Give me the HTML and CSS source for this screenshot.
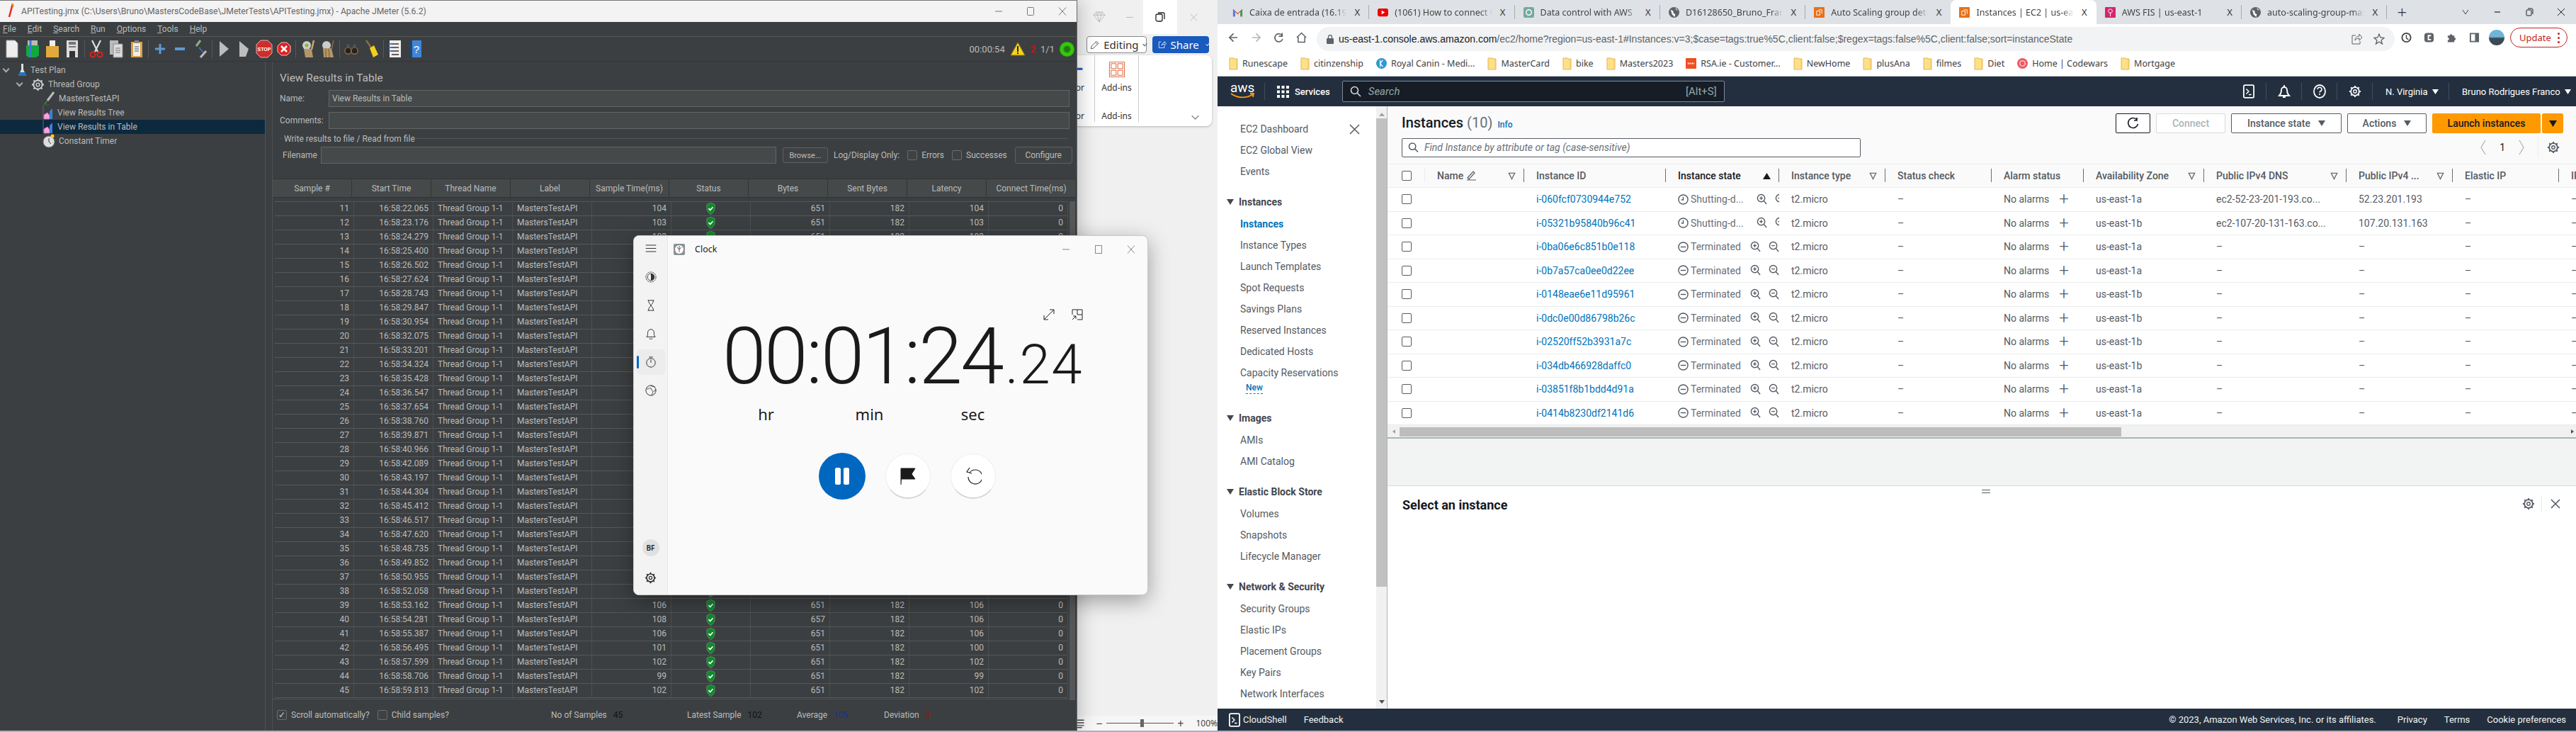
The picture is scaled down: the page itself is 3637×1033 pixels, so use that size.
FILE: index.html
```html
<!DOCTYPE html>
<html lang="en">
<head>
    <meta charset="UTF-8">
    <meta name="viewport" content="width=device-width, initial-scale=1.0">
    <title>Desktop</title>
    <link rel="stylesheet" href="styles.css">
</head>
<body>
    <svg class="defs" width="0" height="0">
        <symbol id="folder" viewBox="0 0 13 18"><path d="M1 1h6l1 1h4v15H1z" fill="#ffdf8a" stroke="#e2b84f"/><path d="M11 3v14" stroke="#f2c660"/></symbol>
        <symbol id="shield" viewBox="0 0 14 18"><path d="M7 0l6 2.500v6c0 4-3 7.500-6 9.500-3-2-6-5.500-6-9.500v-6z" fill="#0d8a2a" stroke="#7fae86" stroke-width=".6"/><path d="M3.800 8.600l2.400 2.600 4-4.600" fill="none" stroke="#fff" stroke-width="1.700"/></symbol>
        <symbol id="chart" viewBox="0 0 16 22"><path d="M1 20V1" stroke="#666" fill="none"/><path d="M2 20v-6l5-3 3 4v5z" fill="#f4a6e0" stroke="#d36ab8"/><path d="M10 20V9l4-4v15z" fill="#3e80d8"/></symbol>
        <symbol id="zoomin" viewBox="0 0 16 18"><circle cx="7" cy="7" r="5.500" fill="none" stroke="#545b64" stroke-width="1.500"/><path d="M11 11l4 5M4.500 7h5M7 4.500v5" fill="none" stroke="#545b64" stroke-width="1.500"/></symbol>
        <symbol id="zoomout" viewBox="0 0 16 18"><circle cx="7" cy="7" r="5.500" fill="none" stroke="#545b64" stroke-width="1.500"/><path d="M11 11l4 5M4.500 7h5" fill="none" stroke="#545b64" stroke-width="1.500"/></symbol>
        <symbol id="stop-state" viewBox="0 0 16 16"><circle cx="8" cy="8" r="7" fill="none" stroke="#545b64" stroke-width="1.500"/><path d="M4 8h8" stroke="#545b64" stroke-width="1.500"/></symbol>
        <symbol id="wait-state" viewBox="0 0 16 16"><circle cx="8" cy="8" r="7" fill="none" stroke="#545b64" stroke-width="1.500"/><path d="M8 4v4.500H5" fill="none" stroke="#545b64" stroke-width="1.500"/></symbol>
        <symbol id="gear" viewBox="0 0 20 20"><circle cx="10" cy="10" r="6.500" fill="none" stroke="currentColor" stroke-width="2"/><circle cx="10" cy="10" r="2.500" fill="none" stroke="currentColor" stroke-width="1.500"/><path d="M10 1v3M10 16v3M1 10h3M16 10h3M3.600 3.600l2 2M14.400 14.400l2 2M3.600 16.400l2-2M14.400 5.600l2-2" stroke="currentColor" stroke-width="2"/></symbol>
        <symbol id="caret" viewBox="0 0 10 10"><path d="M0 1h10L5 9z" fill="currentColor"/></symbol>
        <symbol id="caret-o" viewBox="0 0 12 12"><path d="M1.500 1.500h9L6 10.500z" fill="none" stroke="currentColor" stroke-width="1.500"/></symbol>
        <symbol id="term" viewBox="0 0 18 22"><rect x="1" y="1" width="16" height="20" rx="2" fill="none" stroke="currentColor" stroke-width="2"/><path d="M5 7l4 4-4 4M9 16h4" fill="none" stroke="currentColor" stroke-width="1.600"/></symbol>
    </svg>

    <!-- word, mostly behind the other windows -->
    <section class="word">
        <div class="word-caption">
            <svg class="w-ic" viewBox="0 0 20 18"><path d="M5 1h10l4 5-9 11L1 6zM1 6h18M7 6l3 11 3-11M5 1l2 5 3-5 3 5 2-5" fill="none" stroke="#bbb" stroke-width="1.100"/></svg>
            <span class="w-min"></span>
            <span class="w-active"><svg width="14" height="14" viewBox="0 0 14 14"><rect x="1" y="3" width="9" height="10" rx="2" fill="none" stroke="#222" stroke-width="1.300"/><path d="M4 1h7a2 2 0 012 2v7" fill="none" stroke="#222" stroke-width="1.300"/></svg></span>
            <svg class="w-close" viewBox="0 0 14 14"><path d="M1 1l12 12M13 1L1 13" stroke="#bbb" stroke-width="1.200"/></svg>
        </div>
        <div class="word-actions">
            <span class="editing">
                <svg width="19" height="19" viewBox="0 0 19 19"><path d="M2 17l1-5L13 2l4 4L7 16zM11 4l4 4" fill="none" stroke="#333" stroke-width="1.100"/></svg>
                Editing <i class="chev"></i>
            </span>
            <span class="share">
                <svg width="18" height="18" viewBox="0 0 18 18"><path d="M7 3H2v13h12v-4M8 11c0-4 3-6 6-6V2l4 5-4 4V8c-3 0-5 1-6 3z" fill="none" stroke="#fff" stroke-width="1.200"/></svg>
                Share <i class="chev chev-w"></i>
            </span>
        </div>
        <div class="ribbon">
            <div class="rb-group rb-editor">
                <svg width="24" height="28" viewBox="0 0 24 28"><path d="M0 4h10M0 13h24M0 22h10" stroke="#185abd" stroke-width="4"/><circle cx="11" cy="3" r="3" fill="#185abd"/></svg>
                <span class="rb-text">Editor</span>
                <span class="rb-label">Editor</span>
            </div>
            <div class="rb-group rb-addins">
                <svg width="28" height="28" viewBox="0 0 28 28"><path d="M.5.500h27v27H.5z" fill="none" stroke="#d83b01"/><path d="M3.500 3.500h9v9h-9zM15.500 3.500h9v9h-9zM3.500 15.500h9v9h-9zM15.500 15.500h9v9h-9z" fill="none" stroke="#d83b01"/></svg>
                <span class="rb-text">Add-ins</span>
                <span class="rb-label">Add-ins</span>
            </div>
            <i class="chev chev-lg"></i>
        </div>
        <div class="word-status">
            <svg class="ws-print" viewBox="0 0 10 14"><path d="M0 2h10M0 6h10M0 10h10M0 13h7" stroke="#444" stroke-width="1.500"/></svg>
            <span class="ws-sign">−</span>
            <span class="slider"><i class="thumb"></i></span>
            <span class="ws-sign">+</span>
            <span class="ws-pct">100%</span>
        </div>
    </section>

    <!-- jmeter -->
    <section class="jmeter">
        <div class="jm-title">
            <svg width="10" height="24" viewBox="0 0 10 24"><path d="M7 1L2 20" stroke="#e0302a" stroke-width="2.600"/><path d="M7 1l1 5" stroke="#f5a623" stroke-width="2"/></svg>
            <span class="jm-title-text">APITesting.jmx (C:\Users\Bruno\MastersCodeBase\JMeterTests\APITesting.jmx) - Apache JMeter (5.6.2)</span>
            <span class="win-btns">
                <svg viewBox="0 0 12 12"><path d="M1 6h10" stroke="#777"/></svg>
                <svg viewBox="0 0 12 12"><rect x="1.500" y=".5" width="9" height="11" rx="1" fill="none" stroke="#777"/></svg>
                <svg viewBox="0 0 12 12"><path d="M1 .5l10 11M11 .5L1 11.500" stroke="#777"/></svg>
            </span>
        </div>
        <nav class="jm-menu">
            <a><u>F</u>ile</a><a><u>E</u>dit</a><a><u>S</u>earch</a><a><u>R</u>un</a><a><u>O</u>ptions</a><a><u>T</u>ools</a><a><u>H</u>elp</a>
        </nav>
        <div class="jm-toolbar">
            <span class="tb"><svg viewBox="0 0 20 26"><path d="M2 1h12l4 4v20H2z" fill="#eee" stroke="#aaa"/></svg></span>
            <span class="tb"><svg viewBox="0 0 20 26"><path d="M3 1h14v8H3z" fill="#bbb"/><path d="M1 8h18v14l-4 3H4l-3-3z" fill="#13a83e"/><path d="M7 1v24" stroke="#3a7bd5" stroke-width="3"/></svg></span>
            <span class="tb"><svg viewBox="0 0 20 26"><path d="M6 1h8v8H6z" fill="#eee"/><path d="M1 9h18v16H1z" fill="#e3a93b"/></svg></span>
            <span class="tb"><svg viewBox="0 0 20 26"><path d="M2 1h16v24H2z" fill="#ddd"/><path d="M5 3h10v4H5zM5 9h10v2H5z" fill="#777"/><path d="M6 16h8v9H6z" fill="#333"/></svg></span>
            <i class="tb-sep"></i>
            <span class="tb"><svg viewBox="0 0 20 26"><path d="M4 1l8 16M16 1L8 17" stroke="#ddd" stroke-width="2.200"/><circle cx="5" cy="21" r="3.500" fill="none" stroke="#e02020" stroke-width="2"/><circle cx="15" cy="21" r="3.500" fill="none" stroke="#e02020" stroke-width="2"/></svg></span>
            <span class="tb"><svg viewBox="0 0 20 26"><path d="M1 1h12v20H1z" fill="#bbb"/><path d="M6 6h13v19H6z" fill="#ddd" stroke="#888"/><path d="M9 12h7M9 15h7M9 18h7" stroke="#777"/></svg></span>
            <span class="tb"><svg viewBox="0 0 20 26"><path d="M2 3h16v22H2z" fill="#d8a24a"/><path d="M5 5h10v18H5z" fill="#eee"/><path d="M7 1h6v4H7z" fill="#888"/><path d="M7 10h6M7 13h6M7 16h6" stroke="#555"/></svg></span>
            <i class="tb-sep"></i>
            <span class="tb"><svg viewBox="0 0 20 20"><path d="M10 3v14M3 10h14" stroke="#5b9bd5" stroke-width="3"/></svg></span>
            <span class="tb"><svg viewBox="0 0 20 20"><path d="M3 10h14" stroke="#5b9bd5" stroke-width="4"/></svg></span>
            <span class="tb"><svg viewBox="0 0 20 26"><path d="M10 1L4 9" stroke="#8fa98f" stroke-width="3"/><path d="M8 11l6 7" stroke="#3a7bd5" stroke-width="1.500"/><path d="M18 16l-8 9" stroke="#bbb" stroke-width="3"/></svg></span>
            <i class="tb-sep"></i>
            <span class="tb"><svg viewBox="0 0 20 26"><path d="M4 2l13 11L4 24z" fill="#bdbdbd"/></svg></span>
            <span class="tb"><svg viewBox="0 0 20 26"><path d="M4 2l13 11-4 11H4z" fill="#bdbdbd"/></svg></span>
            <span class="tb tb-wide"><svg viewBox="0 0 24 26"><path d="M7 1h10l6 6v12l-6 6H7l-6-6V7z" fill="#cf2d2d" stroke="#e8b0b0"/><text x="12" y="16" class="stop-t">STOP</text></svg></span>
            <span class="tb"><svg viewBox="0 0 20 26"><path d="M6 4h8l5 5v8l-5 5H6l-5-5V9z" fill="#e02020" stroke="#f2c0c0"/><path d="M6 9l8 8M14 9l-8 8" stroke="#fff" stroke-width="2.500"/></svg></span>
            <i class="tb-sep"></i>
            <span class="tb"><svg viewBox="0 0 20 26"><circle cx="8" cy="8" r="6" fill="#ccc"/><circle cx="8" cy="8" r="2.500" fill="#7dbb3c"/><path d="M4 13h11l2 12H6z" fill="#b5966a"/><path d="M15 14l3-13" stroke="#c8a86d" stroke-width="2.500"/></svg></span>
            <span class="tb"><svg viewBox="0 0 20 26"><circle cx="8" cy="8" r="6" fill="#ccc"/><path d="M3 12h12l3 13H4z" fill="#b5966a"/><path d="M7 13v12M11 13l1 12M15 14l3-13" stroke="#8a6d40" stroke-width="1.500"/></svg></span>
            <i class="tb-sep"></i>
            <span class="tb"><svg viewBox="0 0 22 20"><circle cx="6" cy="13" r="5" fill="#222" stroke="#a06b2c" stroke-width="1.500"/><circle cx="16" cy="13" r="5" fill="#222" stroke="#a06b2c" stroke-width="1.500"/><path d="M4 3h4v6H4zM14 3h4v6h-4zM9 8h4v3H9z" fill="#555"/></svg></span>
            <span class="tb"><svg viewBox="0 0 20 26"><path d="M2 1l9 13" stroke="#8a6d40" stroke-width="2.500"/><path d="M7 12l6-4 6 13-7 4z" fill="#f2d01e"/></svg></span>
            <i class="tb-sep"></i>
            <span class="tb"><svg viewBox="0 0 20 26"><path d="M2 1h16v24H2z" fill="#eee"/><path d="M5 6h10M5 11h10M5 16h10M5 21h10" stroke="#333" stroke-width="1.500"/><path d="M1 6h4M1 11h4M1 16h4" stroke="#3a7bd5" stroke-width="2"/></svg></span>
            <span class="tb"><svg viewBox="0 0 20 26"><path d="M2 1h16v24H2z" fill="#3f86d8"/><path d="M2 1h3v24H2z" fill="#22456f"/><text x="11" y="19" class="help-t">?</text></svg></span>
            <div class="jm-run">
                <span>00:00:54</span>
                <svg width="22" height="20" viewBox="0 0 22 20"><path d="M11 1l10 18H1z" fill="#f6d31e" stroke="#8c7a10"/><path d="M11 6v8M11 15v2" stroke="#222" stroke-width="2"/></svg>
                <span class="jm-err">2</span>
                <span>1/1</span>
                <i class="jm-led"></i>
            </div>
        </div>
        <div class="jm-body">
            <aside class="jm-tree">
                <div class="tree-row lv0"><i class="tw"></i><svg width="13" height="20" viewBox="0 0 13 20"><path d="M5 1h3v8l4 9H1l4-9z" fill="#ddd"/><path d="M3 13h7l2 5H1z" fill="#1e73c8"/></svg><span>Test Plan</span></div>
                <div class="tree-row lv1"><i class="tw"></i><svg class="c-gear" width="19" height="19"><use href="#gear"/></svg><span>Thread Group</span></div>
                <div class="tree-row lv2"><svg width="18" height="20" viewBox="0 0 18 20"><path d="M16 1L7 13" stroke="#bbb" stroke-width="3"/><path d="M7 13l-4 5" stroke="#2a8a3a" stroke-width="2"/><path d="M1 19h9" stroke="#555"/></svg><span>MastersTestAPI</span></div>
                <div class="tree-row lv2"><svg width="16" height="22"><use href="#chart"/></svg><span>View Results Tree</span></div>
                <div class="tree-row lv2 tree-sel"><svg width="16" height="22"><use href="#chart"/></svg><span>View Results in Table</span></div>
                <div class="tree-row lv2"><svg width="18" height="20" viewBox="0 0 18 20"><circle cx="9" cy="11" r="8" fill="#ddd" stroke="#777"/><path d="M9 6v5l3 3" stroke="#333" fill="none"/><circle cx="14" cy="3" r="2.500" fill="#f2d01e"/></svg><span>Constant Timer</span></div>
            </aside>
            <main class="jm-main">
                <h2 class="jm-heading">View Results in Table</h2>
                <div class="jm-field"><label class="lb-name">Name:</label><div class="jm-input">View Results in Table</div></div>
                <div class="jm-field"><label class="lb-name">Comments:</label><div class="jm-input"></div></div>
                <div class="jm-legend"><span>Write results to file / Read from file</span></div>
                <div class="jm-field jm-file">
                    <label class="lb-file">Filename</label>
                    <div class="jm-input"></div>
                    <span class="jm-btn jm-browse">Browse...</span>
                    <span class="lg-label">Log/Display Only:</span>
                    <i class="jm-check"></i><span>Errors</span>
                    <i class="jm-check"></i><span>Successes</span>
                    <span class="jm-btn jm-config">Configure</span>
                </div>
                <div class="res-head">
                    <span>Sample #</span><span>Start Time</span><span>Thread Name</span><span>Label</span><span>Sample Time(ms)</span><span>Status</span><span>Bytes</span><span>Sent Bytes</span><span>Latency</span><span>Connect Time(ms)</span>
                </div>
                <div class="res-wrap">
                    <div id="resRows" class="res-rows"></div>
                    <i class="res-scroll"></i>
                </div>
                <div class="jm-foot">
                    <i class="jm-check jm-checked">✓</i><span>Scroll automatically?</span>
                    <i class="jm-check"></i><span>Child samples?</span>
                    <span class="st st-1">No of Samples <b>45</b></span>
                    <span class="st st-2">Latest Sample <b>102</b></span>
                    <span class="st st-3">Average <b class="st-blue">105</b></span>
                    <span class="st st-4">Deviation <b class="st-red">3</b></span>
                </div>
            </main>
        </div>
    </section>

    <!-- clock app -->
    <section class="clock">
        <aside class="cl-side">
            <svg class="cl-ic cl-burger" viewBox="0 0 16 12"><path d="M0 1h16M0 6h16M0 11h16" stroke="#333" stroke-width="1.100"/></svg>
            <svg class="cl-ic" viewBox="0 0 18 18"><circle cx="9" cy="9" r="8" fill="none" stroke="#333" stroke-dasharray="3 1"/><circle cx="9" cy="9" r="5.500" fill="none" stroke="#333"/><path d="M9 3.500a5.500 5.500 0 010 11z" fill="#333"/></svg>
            <svg class="cl-ic" viewBox="0 0 18 18"><path d="M4 1h10M4 17h10M5 1c0 4 3 6 4 8 1-2 4-4 4-8M5 17c0-4 3-6 4-8 1 2 4 4 4 8" fill="none" stroke="#333" stroke-width="1.100"/></svg>
            <svg class="cl-ic" viewBox="0 0 18 18"><path d="M2 14c2-2 2-3 2-7a5 5 0 0110 0c0 4 0 5 2 7zM7 16a2 2 0 004 0" fill="none" stroke="#333" stroke-width="1.100"/></svg>
            <span class="cl-sel"><i class="cl-bar"></i><svg class="cl-ic" viewBox="0 0 18 18"><circle cx="9" cy="10" r="7" fill="none" stroke="#333" stroke-width="1.100"/><path d="M6 1h6M9 5v5" stroke="#333" stroke-width="1.100"/></svg></span>
            <svg class="cl-ic" viewBox="0 0 18 18"><circle cx="9" cy="9" r="8" fill="none" stroke="#333" stroke-width="1.100"/><path d="M2 6c3 2 4-1 6-1s1 3 3 4 1 4-1 8M9 1c2 2 3 2 6 2M17 9c-2-1-3 0-3 2" fill="none" stroke="#333"/></svg>
            <span class="cl-grow"></span>
            <span class="cl-avatar">BF</span>
            <svg class="cl-ic cl-gear" width="18" height="18"><use href="#gear"/></svg>
        </aside>
        <div class="cl-main">
            <div class="cl-title">
                <svg width="16" height="16" viewBox="0 0 16 16"><rect width="16" height="16" rx="2" fill="#8a9296"/><circle cx="8" cy="8" r="6" fill="#fff"/><path d="M8 8V3M8 8l-3-3M8 8l3-3" stroke="#555"/><path d="M8 8v4" stroke="#d83b01"/></svg>
                <span class="cl-name">Clock</span>
                <span class="win-btns cl-btns">
                    <svg viewBox="0 0 12 12"><path d="M1 6h10" stroke="#888"/></svg>
                    <svg viewBox="0 0 12 12"><rect x="1.500" y=".5" width="9" height="11" fill="none" stroke="#888"/></svg>
                    <svg viewBox="0 0 12 12"><path d="M1 .5l10 11M11 .5L1 11.500" stroke="#888"/></svg>
                </span>
            </div>
            <div class="cl-tools">
                <svg width="16" height="16" viewBox="0 0 16 16"><path d="M1 15L15 1M9 1h6v6M1 9v6h6" fill="none" stroke="#222"/></svg>
                <svg width="16" height="16" viewBox="0 0 16 16"><path d="M1 8V1h14v14H8M8 1v7h7M1 15l5-5M2 10h4v4" fill="none" stroke="#222"/></svg>
            </div>
            <div class="cl-digits"><span>00:01:24</span><span class="cl-frac">.24</span></div>
            <div class="cl-units"><span>hr</span><span>min</span><span>sec</span></div>
            <div class="cl-actions">
                <span class="cl-pause"><svg width="24" height="24" viewBox="0 0 24 24"><rect x="2" y="0" width="8" height="24" rx="2.500" fill="#fff"/><rect x="14" y="0" width="8" height="24" rx="2.500" fill="#fff"/></svg></span>
                <span class="cl-round"><svg width="22" height="24" viewBox="0 0 22 24"><path d="M1 24V1h20l-5 8 5 7H2" fill="#1a1a1a" stroke="#1a1a1a"/></svg></span>
                <span class="cl-round"><svg width="24" height="26" viewBox="0 0 24 26"><path d="M7 8a10 10 0 11-2 6M7 1L3 7l7 2" fill="none" stroke="#222" stroke-width="1.200"/></svg></span>
            </div>
        </div>
    </section>

    <!-- chrome + aws console -->
    <section class="chrome">
        <div class="tabs">
            <div class="tab"><svg class="fav" viewBox="0 0 16 16"><path d="M1 14V3l7 6 7-6v11h-3V7L8 11 4 7v7z" fill="#ea4335"/><path d="M1 14V3l3 3v8z" fill="#4285f4"/><path d="M15 14V3l-3 3v8z" fill="#34a853"/></svg><span class="tab-t">Caixa de entrada (16.194)</span><span class="tab-x">X</span></div>
            <div class="tab"><svg class="fav" viewBox="0 0 16 16"><rect y="2" width="16" height="12" rx="3" fill="#e00"/><path d="M6 5l5 3-5 3z" fill="#fff"/></svg><span class="tab-t">(1061) How to connect to an AWS</span><span class="tab-x">X</span></div>
            <div class="tab"><svg class="fav" viewBox="0 0 16 16"><rect width="16" height="16" rx="3" fill="#74aa9c"/><circle cx="8" cy="8" r="4" fill="none" stroke="#fff" stroke-width="1.500"/></svg><span class="tab-t">Data control with AWS</span><span class="tab-x">X</span></div>
            <div class="tab"><svg class="fav" viewBox="0 0 16 16"><circle cx="8" cy="8" r="8" fill="#5f6368"/><path d="M3 4l4 2v3l3 2-1 4-4-4zM10 1l1 3 3 1" fill="#fff"/></svg><span class="tab-t">D16128650_Bruno_Franco_Masters</span><span class="tab-x">X</span></div>
            <div class="tab"><svg class="fav" viewBox="0 0 16 16"><rect width="16" height="16" rx="1" fill="#e8711a"/><path d="M4 6h5v6H4zM7 4h5v6" fill="none" stroke="#fff"/></svg><span class="tab-t">Auto Scaling group details</span><span class="tab-x">X</span></div>
            <div class="tab tab-on"><svg class="fav" viewBox="0 0 16 16"><rect width="16" height="16" rx="1" fill="#e8711a"/><path d="M4 6h5v6H4zM7 4h5v6" fill="none" stroke="#fff"/></svg><span class="tab-t">Instances | EC2 | us-east-1</span><span class="tab-x">X</span></div>
            <div class="tab"><svg class="fav" viewBox="0 0 16 16"><rect width="16" height="16" rx="1" fill="#d6246e"/><path d="M8 14V8M5 6a3 3 0 016 0c0 3-3 3-3 3S5 9 5 6z" fill="none" stroke="#fff"/></svg><span class="tab-t">AWS FIS | us-east-1</span><span class="tab-x">X</span></div>
            <div class="tab"><svg class="fav" viewBox="0 0 16 16"><circle cx="8" cy="8" r="8" fill="#5f6368"/><path d="M3 4l4 2v3l3 2-1 4-4-4zM10 1l1 3 3 1" fill="#fff"/></svg><span class="tab-t">auto-scaling-group-master</span><span class="tab-x">X</span></div>
            <span class="tab-plus">+</span>
            <span class="chr-btns">
                <svg viewBox="0 0 12 12"><path d="M2 3l4 6 4-6" fill="none" stroke="#444"/></svg>
                <svg viewBox="0 0 12 12"><path d="M2 6h8" stroke="#222" stroke-width="1.200"/></svg>
                <svg viewBox="0 0 12 12"><rect x="2" y="3" width="7" height="8" rx="1" fill="none" stroke="#222"/><path d="M4 1h5a2 2 0 012 2v6" fill="none" stroke="#222"/></svg>
                <svg viewBox="0 0 12 12"><path d="M1 1l10 10M11 1L1 11" stroke="#222"/></svg>
            </span>
        </div>
        <div class="address">
            <span class="nav-b"><svg viewBox="0 0 16 16"><path d="M14 8H2M8 2L2 8l6 6" fill="none" stroke="#5f6368" stroke-width="1.800"/></svg></span>
            <span class="nav-b"><svg viewBox="0 0 16 16"><path d="M2 8h12M8 2l6 6-6 6" fill="none" stroke="#b4b6b9" stroke-width="1.800"/></svg></span>
            <span class="nav-b"><svg viewBox="0 0 16 16"><path d="M13 5a6 6 0 10.800 5M13 1v5H8" fill="none" stroke="#5f6368" stroke-width="1.800"/></svg></span>
            <span class="nav-b"><svg viewBox="0 0 16 16"><path d="M1 8l7-7 7 7M3 7v8h10V7" fill="none" stroke="#5f6368" stroke-width="1.600"/></svg></span>
            <div class="omni">
                <svg width="10" height="13" viewBox="0 0 10 13"><rect y="5" width="10" height="8" rx="1" fill="#5f6368"/><path d="M2.500 5V3a2.500 2.500 0 015 0v2" fill="none" stroke="#5f6368" stroke-width="1.300"/></svg>
                <span class="url"><b>us-east-1.console.aws.amazon.com</b>/ec2/home?region=us-east-1#Instances:v=3;$case=tags:true%5C,client:false;$regex=tags:false%5C,client:false;sort=instanceState</span>
                <svg width="16" height="16" viewBox="0 0 16 16"><path d="M7 3H2v12h11v-4M6 10c0-4 3-6 6-6V1l4 5-4 4V7c-3 0-5 1-6 3z" fill="none" stroke="#5f6368"/></svg>
                <svg class="om-star" width="16" height="16" viewBox="0 0 16 16"><path d="M8 1l2 5 5 .5-4 3.500 1.500 5L8 12l-4.500 3L5 10 1 6.500 6 6z" fill="none" stroke="#5f6368" stroke-width="1.300"/></svg>
            </div>
            <span class="ext"><svg viewBox="0 0 16 16"><circle cx="8" cy="8" r="6.500" fill="none" stroke="#444" stroke-width="2"/><path d="M8 4v5l3 2" fill="none" stroke="#444" stroke-width="1.500"/></svg></span>
            <span class="ext"><svg viewBox="0 0 16 16"><rect x="1" y="1" width="14" height="14" rx="4" fill="#5f6368"/><path d="M11 5H7v6h4" fill="none" stroke="#fff" stroke-width="2"/></svg></span>
            <span class="ext"><svg viewBox="0 0 16 16"><path d="M2 5h3a2 2 0 014 0h3v3a2 2 0 010 4v3H2v-3a2 2 0 000-4z" fill="#5f6368"/></svg></span>
            <span class="ext"><svg viewBox="0 0 16 16"><path d="M2 2h12v12H2z" fill="none" stroke="#5f6368" stroke-width="2"/><path d="M9 2h5v12H9z" fill="#5f6368"/></svg></span>
            <span class="avatar"></span>
            <span class="update">Update <i class="dots"></i></span>
        </div>
        <div class="bookmarks">
            <a><svg class="bm"><use href="#folder"/></svg>Runescape</a>
            <a><svg class="bm"><use href="#folder"/></svg>citinzenship</a>
            <a><svg class="bm-i" viewBox="0 0 16 16"><circle cx="8" cy="8" r="8" fill="#2a9ad6"/><path d="M6 3v10M10 3L6 8l4 5" fill="none" stroke="#fff" stroke-width="1.400"/></svg>Royal Canin - Medi...</a>
            <a><svg class="bm"><use href="#folder"/></svg>MasterCard</a>
            <a><svg class="bm"><use href="#folder"/></svg>bike</a>
            <a><svg class="bm"><use href="#folder"/></svg>Masters2023</a>
            <a><svg class="bm-i" viewBox="0 0 16 16"><rect width="16" height="16" rx="1" fill="#ef4e23"/><path d="M3 8h10" stroke="#fff" stroke-width="2" stroke-dasharray="2 1"/></svg>RSA.ie - Customer...</a>
            <a><svg class="bm"><use href="#folder"/></svg>NewHome</a>
            <a><svg class="bm"><use href="#folder"/></svg>plusAna</a>
            <a><svg class="bm"><use href="#folder"/></svg>filmes</a>
            <a><svg class="bm"><use href="#folder"/></svg>Diet</a>
            <a><svg class="bm-i" viewBox="0 0 16 16"><circle cx="8" cy="8" r="8" fill="#ee5a62"/><circle cx="8" cy="8" r="4" fill="none" stroke="#fff" stroke-width="1.500" stroke-dasharray="2 1"/></svg>Home | Codewars</a>
            <a><svg class="bm"><use href="#folder"/></svg>Mortgage</a>
        </div>

        <header class="aws-bar">
            <span class="aws-logo">aws<svg width="34" height="9" viewBox="0 0 34 9"><path d="M1 1c9 7 22 7 31 1M28 1l5 0-1 5" fill="none" stroke="#f90" stroke-width="1.800"/></svg></span>
            <i class="aws-sep"></i>
            <svg class="aws-grid" width="17" height="17" viewBox="0 0 17 17"><path d="M0 0h4v4H0zM6.500 0h4v4h-4zM13 0h4v4h-4zM0 6.500h4v4H0zM6.500 6.500h4v4h-4zM13 6.500h4v4h-4zM0 13h4v4H0zM6.500 13h4v4h-4zM13 13h4v4h-4z" fill="#fff"/></svg>
            <span class="aws-services">Services</span>
            <div class="aws-search">
                <svg width="16" height="16" viewBox="0 0 16 16"><circle cx="6.500" cy="6.500" r="5" fill="none" stroke="#d5dbdb" stroke-width="1.600"/><path d="M10 10l5 5" stroke="#d5dbdb" stroke-width="1.600"/></svg>
                <em>Search</em>
                <span>[Alt+S]</span>
            </div>
            <div class="aws-right">
                <span class="ar-ic"><svg width="16" height="20"><use href="#term"/></svg></span>
                <span class="ar-ic"><svg width="20" height="20" viewBox="0 0 20 20"><path d="M3 16c2-2 3-4 3-8a4 4 0 018 0c0 4 1 6 3 8zM8 18h4M10 1v3" fill="none" stroke="#fff" stroke-width="1.800"/></svg></span>
                <span class="ar-ic"><svg width="18" height="20" viewBox="0 0 18 20"><ellipse cx="9" cy="10" rx="8" ry="9" fill="none" stroke="#fff" stroke-width="1.800"/><path d="M6 7a3 3 0 116 .5c0 2-3 2-3 4M9 13v2" fill="none" stroke="#fff" stroke-width="1.600"/></svg></span>
                <span class="ar-ic ar-last"><svg width="18" height="20"><use href="#gear"/></svg></span>
                <span class="ar-txt">N. Virginia <svg class="ar-caret" width="9" height="9"><use href="#caret"/></svg></span>
                <span class="ar-txt ar-user">Bruno Rodrigues Franco <svg class="ar-caret" width="9" height="9"><use href="#caret"/></svg></span>
            </div>
        </header>

        <div class="console">
            <nav class="side-nav">
                <svg class="nav-x" width="15" height="15" viewBox="0 0 15 15"><path d="M1 1l13 13M14 1L1 14" stroke="#545b64" stroke-width="1.500"/></svg>
                <a>EC2 Dashboard</a><a>EC2 Global View</a><a>Events</a>
                <h4><svg width="10" height="10"><use href="#caret"/></svg>Instances</h4>
                <a class="on">Instances</a><a>Instance Types</a><a>Launch Templates</a><a>Spot Requests</a><a>Savings Plans</a><a>Reserved Instances</a><a>Dedicated Hosts</a><a>Capacity Reservations</a>
                <span class="new">New</span>
                <h4><svg width="10" height="10"><use href="#caret"/></svg>Images</h4>
                <a>AMIs</a><a>AMI Catalog</a>
                <h4><svg width="10" height="10"><use href="#caret"/></svg>Elastic Block Store</h4>
                <a>Volumes</a><a>Snapshots</a><a>Lifecycle Manager</a>
                <h4><svg width="10" height="10"><use href="#caret"/></svg>Network &amp; Security</h4>
                <a>Security Groups</a><a>Elastic IPs</a><a>Placement Groups</a><a>Key Pairs</a><a>Network Interfaces</a>
            </nav>
            <div class="nav-scroll"><i class="ns-up"></i><i class="ns-thumb"></i><i class="ns-down"></i></div>
            <div class="aws-main">
                <div class="list-top">
                    <div class="lt-row1">
                        <h1>Instances <span>(10)</span> <a>Info</a></h1>
                        <div class="lt-btns">
                            <span class="a-btn a-refresh"><svg width="18" height="18" viewBox="0 0 18 18"><path d="M14 4a7 7 0 101.500 6M14 1v4h-4" fill="none" stroke="#16191f" stroke-width="1.600"/></svg></span>
                            <span class="a-btn a-off">Connect</span>
                            <span class="a-btn a-state">Instance state <svg width="10" height="10"><use href="#caret"/></svg></span>
                            <span class="a-btn a-act">Actions <svg width="10" height="10"><use href="#caret"/></svg></span>
                            <span class="a-btn a-launch">Launch instances</span>
                            <span class="a-btn a-drop"><svg width="11" height="11"><use href="#caret"/></svg></span>
                        </div>
                    </div>
                    <div class="lt-row2">
                        <div class="filter">
                            <svg width="15" height="16" viewBox="0 0 16 16"><circle cx="6.500" cy="6.500" r="5" fill="none" stroke="#545b64" stroke-width="1.600"/><path d="M10 10l5 5" stroke="#545b64" stroke-width="1.600"/></svg>
                            <em>Find Instance by attribute or tag (case-sensitive)</em>
                        </div>
                        <div class="pager">
                            <svg width="10" height="22" viewBox="0 0 10 22"><path d="M8 1L2 11l6 10" fill="none" stroke="#aab7b8" stroke-width="1.300"/></svg>
                            <span>1</span>
                            <svg width="10" height="22" viewBox="0 0 10 22"><path d="M2 1l6 10-6 10" fill="none" stroke="#aab7b8" stroke-width="1.300"/></svg>
                            <i></i>
                            <svg class="pg-gear" width="18" height="18"><use href="#gear"/></svg>
                        </div>
                    </div>
                </div>
                <div id="instTable" class="inst">
                    <div class="inst-row inst-head">
                        <div><i class="a-check"></i></div>
                        <div>Name <svg width="15" height="14" viewBox="0 0 15 14"><path d="M2 10L10 1l2 2-8 9zM1 13h13" fill="none" stroke="#545b64" stroke-width="1.200"/></svg><svg class="sort" width="11" height="11"><use href="#caret-o"/></svg></div>
                        <div>Instance ID</div>
                        <div class="sel">Instance state<svg class="sort sort-up" width="11" height="11" viewBox="0 0 10 10"><path d="M0 9h10L5 1z" fill="#16191f"/></svg></div>
                        <div>Instance type<svg class="sort" width="11" height="11"><use href="#caret-o"/></svg></div>
                        <div>Status check</div>
                        <div>Alarm status</div>
                        <div>Availability Zone<svg class="sort" width="11" height="11"><use href="#caret-o"/></svg></div>
                        <div>Public IPv4 DNS<svg class="sort" width="11" height="11"><use href="#caret-o"/></svg></div>
                        <div>Public IPv4 ...<svg class="sort" width="11" height="11"><use href="#caret-o"/></svg></div>
                        <div>Elastic IP</div>
                        <div class="last">IP</div>
                    </div>
                </div>
                <div class="h-scroll"><i class="hs-left"></i><i class="hs-thumb"></i><i class="hs-right"></i></div>
                <div class="grey-gap"></div>
                <div class="split">
                    <i class="split-handle"></i>
                    <h3>Select an instance</h3>
                    <div class="split-tools">
                        <svg width="18" height="18"><use href="#gear"/></svg>
                        <i></i>
                        <svg width="14" height="14" viewBox="0 0 14 14"><path d="M1 1l12 12M13 1L1 13" stroke="#545b64" stroke-width="1.600"/></svg>
                    </div>
                </div>
            </div>
        </div>

        <footer class="aws-foot">
            <svg class="foot-term" width="16" height="20"><use href="#term"/></svg>
            <span>CloudShell</span>
            <span class="ft-fb">Feedback</span>
            <span class="ft-right">© 2023, Amazon Web Services, Inc. or its affiliates.</span>
            <span>Privacy</span>
            <span>Terms</span>
            <span>Cookie preferences</span>
        </footer>
    </section>

    <script src="script.js"></script>
</body>
</html>
```
FILE: styles.css
```css
* {
    box-sizing: border-box;
}
html, body {
    margin: 0;
    height: 100%;
}
body {
    position: relative;
    width: 3637px;
    height: 1033px;
    overflow: hidden;
    background: #f0f0f0;
    font-family: "Noto Sans", sans-serif;
    border-bottom: 2px solid #a9b2c0;
}
.defs {
    position: absolute;
}
i {
    font-style: normal;
}

/* ---- word ---- */
.word {
    position: absolute;
    left: 1300px;
    top: 0;
    width: 419px;
    height: 1031px;
    display: flex;
    flex-direction: column;
    color: #333;
}
.word-caption {
    height: 48px;
    display: flex;
    align-items: center;
    padding-left: 243px;
}
.w-ic {
    width: 18px;
    height: 16px;
}
.w-min {
    width: 10px;
    height: 1px;
    background: #bbb;
    margin-left: 29px;
}
.w-active {
    width: 48px;
    height: 48px;
    margin-left: 14px;
    background: #fff;
    display: flex;
    align-items: center;
    justify-content: center;
}
.w-close {
    width: 11px;
    height: 11px;
    margin-left: 18px;
}
.word-actions {
    height: 30px;
    display: flex;
    align-items: flex-start;
    padding: 3px 0 0 234px;
    gap: 8px;
}
.editing, .share {
    height: 24px;
    display: flex;
    align-items: center;
    gap: 6px;
    font-size: 15px;
    border-radius: 4px;
}
.editing {
    width: 85px;
    padding-left: 4px;
    background: #fff;
    border: 1px solid #8a8a8a;
}
.share {
    width: 80px;
    padding-left: 8px;
    background: #185abd;
    color: #fff;
}
.chev {
    width: 6px;
    height: 6px;
    border-right: 1.500px solid #333;
    border-bottom: 1.500px solid #333;
    transform: rotate(45deg) scale(.8);
    margin-top: -3px;
}
.chev-w {
    border-color: #fff;
    margin-left: 4px;
}
.chev-lg {
    position: absolute;
    right: 19px;
    bottom: 10px;
    width: 9px;
    height: 9px;
    border-width: 1px;
}
.ribbon {
    position: relative;
    width: 411px;
    height: 100px;
    background: #fff;
    border-radius: 8px;
    box-shadow: 0 1px 3px rgba(0, 0, 0, .25);
    display: flex;
    justify-content: flex-end;
    padding-right: 103px;
    font-size: 12px;
}
.rb-group {
    height: 94px;
    display: flex;
    flex-direction: column;
    align-items: center;
    padding-top: 9px;
    border-right: 1px solid #ccc;
}
.rb-editor {
    width: 100px;
    align-items: flex-end;
    padding-right: 14px;
}
.rb-addins {
    width: 62px;
}
.rb-addins svg {
    display: block;
}
.rb-text {
    margin-top: 7px;
    line-height: 16px;
}
.rb-label {
    margin-top: 24px;
    line-height: 16px;
}
.word-status {
    margin-top: auto;
    height: 21px;
    width: 419px;
    background: #f6f6f6;
    display: flex;
    align-items: center;
    padding-left: 221px;
    font-size: 12px;
    color: #444;
}
.ws-print {
    width: 10px;
    height: 14px;
}
.ws-sign {
    font-size: 16px;
    width: 16px;
    text-align: center;
}
.ws-sign:first-of-type {
    margin-left: 14px;
}
.slider {
    position: relative;
    width: 100px;
    height: 1px;
    background: #555;
    margin: 0 2px;
}
.thumb {
    position: absolute;
    left: 48px;
    top: -5px;
    width: 5px;
    height: 11px;
    background: #666;
}
.ws-pct {
    margin-left: 14px;
}

/* ---- jmeter ---- */
.jmeter {
    position: absolute;
    left: 0;
    top: 0;
    width: 1521px;
    height: 1031px;
    display: flex;
    flex-direction: column;
    background: #3c3f41;
    color: #bbb;
    font-family: Roboto, sans-serif;
    font-size: 12px;
    box-shadow: 4px 0 24px rgba(0, 0, 0, .22);
    border-top: 1px solid #777;
    border-right: 1px solid #666;
}
.jm-title {
    height: 30px;
    flex: none;
    display: flex;
    align-items: center;
    padding-left: 11px;
    gap: 9px;
    background: #f3f3f3;
    color: #666;
    font-size: 12.200px;
}
.win-btns {
    margin-left: auto;
    display: flex;
    gap: 33px;
    padding-right: 14px;
}
.win-btns svg {
    width: 12px;
    height: 12px;
}
.jm-menu {
    height: 21px;
    flex: none;
    display: flex;
    align-items: center;
    gap: 13px;
    padding-left: 4px;
    border-bottom: 1px solid #555;
}
.jm-menu a {
    padding-right: 3px;
}
.jm-toolbar {
    height: 35px;
    flex: none;
    display: flex;
    align-items: center;
    padding-left: 3px;
    border-bottom: 1px solid #333537;
}
.tb {
    width: 28.400px;
    height: 28px;
    display: flex;
    align-items: center;
    justify-content: center;
}
.tb svg {
    width: 20px;
    height: 26px;
}
.tb-wide svg {
    width: 24px;
}
.stop-t {
    font: bold 7px "Liberation Sans", sans-serif;
    fill: #fff;
    text-anchor: middle;
}
.help-t {
    font: 15px "Liberation Sans", sans-serif;
    fill: #fff;
    text-anchor: middle;
}
.tb-sep {
    width: 1px;
    height: 26px;
    margin: 0 2px;
    background: #55585a;
}
.jm-run {
    margin-left: auto;
    display: flex;
    align-items: center;
    gap: 7px;
    padding-right: 3px;
    font-size: 13px;
}
.jm-err {
    color: #f00;
}
.jm-led {
    width: 21px;
    height: 21px;
    border-radius: 50%;
    background: radial-gradient(circle, #1f7a10 0 22%, #3ad00d 45%, #169a00 100%);
}
.jm-body {
    flex: 1;
    display: flex;
    min-height: 0;
}
.jm-tree {
    width: 375px;
    flex: none;
    padding-top: 2px;
    border-right: 1px solid #505356;
}
.tree-row {
    height: 20px;
    display: flex;
    align-items: center;
    gap: 5px;
    font-size: 12px;
}
.tree-row svg {
    flex: none;
}
.lv0 {
    padding-left: 4px;
}
.lv1 {
    padding-left: 23px;
}
.lv2 {
    padding-left: 60px;
}
.tw {
    width: 7px;
    height: 7px;
    margin: -3px 8px 0 1px;
    border-right: 2px solid #aaa;
    border-bottom: 2px solid #aaa;
    transform: rotate(45deg);
}
.c-gear {
    color: #d0d4d8;
}
.tree-sel {
    background: #0d293e;
}
.jm-main {
    flex: 1;
    min-width: 0;
    margin-left: 9px;
    border-left: 1px solid #505356;
    display: flex;
    flex-direction: column;
}
.jm-heading {
    margin: 13px 0 6px 10px;
    font-size: 15.500px;
    font-weight: 400;
    line-height: 21px;
}
.jm-field {
    height: 24px;
    flex: none;
    display: flex;
    align-items: center;
    margin-bottom: 7px;
    padding-left: 10px;
}
.lb-name {
    width: 69px;
    flex: none;
}
.jm-input {
    flex: 1;
    height: 24px;
    margin-right: 10px;
    padding: 0 4px;
    line-height: 22px;
    background: #45494a;
    border: 1px solid #646464;
}
.jm-legend {
    height: 1px;
    background: #555;
    margin: 6px 13px 11px 11px;
    display: flex;
    align-items: center;
}
.jm-legend span {
    background: #3c3f41;
    padding: 0 2px;
    margin-left: 3px;
}
.jm-file {
    padding-left: 14px;
    gap: 0;
    margin-bottom: 0;
}
.lb-file {
    width: 54px;
    flex: none;
}
.jm-file .jm-input {
    flex: none;
    width: 643px;
    margin-right: 9px;
}
.jm-btn {
    display: flex;
    align-items: center;
    justify-content: center;
    border: 1px solid #5e6060;
    border-radius: 3px;
    background: #3f4243;
    flex: none;
}
.jm-browse {
    width: 64px;
    height: 22px;
    font-size: 11px;
}
.lg-label {
    margin: 0 11px 0 8px;
    white-space: nowrap;
}
.jm-check {
    width: 14px;
    height: 14px;
    flex: none;
    border: 1px solid #6b6b6b;
    border-radius: 2px;
    background: #3f4243;
    margin-right: 6px;
}
.jm-file .jm-check + span {
    margin-right: 11px;
}
.jm-config {
    width: 81px;
    height: 24px;
    margin-left: auto;
    margin-right: 16px;
}
.res-head {
    height: 27px;
    flex: none;
    margin-top: 21px;
    display: grid;
    grid-template-columns: 112px repeat(8, 112px) 1fr;
    background: #45494a;
    border-top: 1px solid #333;
    border-bottom: 1px solid #333;
}
.res-head span {
    display: flex;
    align-items: center;
    justify-content: center;
    border-right: 1px solid #333537;
}
.res-wrap {
    display: flex;
    gap: 3px;
    padding: 5px 0 0 3px;
    height: 708px;
    flex: none;
    border-bottom: 1px solid #505356;
}
.res-rows {
    width: 1119px;
    height: 701px;
    border-top: 1px solid #55585a;
}
.res-row {
    height: 20px;
    display: grid;
    grid-template-columns: repeat(10, 112px);
    border-bottom: 1px solid #55585a;
}
.res-row span {
    display: flex;
    align-items: center;
    justify-content: flex-end;
    padding: 0 6px;
    border-right: 1px solid #4c4f51;
    line-height: 19px;
    white-space: nowrap;
}
.res-row .left {
    justify-content: flex-start;
    padding-left: 6px;
}
.res-row .mid {
    justify-content: center;
}
.res-scroll {
    width: 8px;
    height: 704px;
    background: #555759;
}
.jm-foot {
    flex: 1;
    display: flex;
    align-items: center;
    padding: 0 0 0 6px;
    position: relative;
}
.jm-foot > span:not(.st) {
    margin-right: 11px;
}
.jm-checked {
    color: #c8c8c8;
    font-size: 12px;
    line-height: 12px;
    text-align: center;
}
.st {
    position: absolute;
    top: 15px;
}
.st b {
    font-weight: 400;
    color: #111;
    margin-left: 6px;
}
.st-1 {
    left: 393px;
}
.st-2 {
    left: 585px;
}
.st-3 {
    left: 740px;
}
.st-4 {
    left: 863px;
}
.st b.st-blue {
    color: #1a2f8a;
}
.st b.st-red {
    color: #a01010;
}

/* ---- clock ---- */
.clock {
    position: absolute;
    left: 894px;
    top: 332px;
    width: 727px;
    height: 508px;
    display: flex;
    background: #fafafa;
    border: 1px solid #c9c9c9;
    border-radius: 8px;
    overflow: hidden;
    box-shadow: 0 8px 30px rgba(0, 0, 0, .35);
    color: #1a1a1a;
}
.cl-side {
    width: 48px;
    flex: none;
    display: flex;
    flex-direction: column;
    align-items: center;
    background: #f3f3f3;
    border-right: 1px solid #e8e8e8;
    padding-top: 12px;
    gap: 24px;
}
.cl-ic {
    width: 16px;
    height: 16px;
    flex: none;
}
.cl-burger {
    height: 11px;
    margin-bottom: 3px;
}
.cl-sel {
    position: relative;
    width: 40px;
    height: 36px;
    margin: -10px 0;
    background: #ececec;
    border-radius: 5px;
    display: flex;
    align-items: center;
    justify-content: center;
}
.cl-bar {
    position: absolute;
    left: 0;
    top: 9px;
    width: 3px;
    height: 18px;
    border-radius: 2px;
    background: #0067c0;
}
.cl-grow {
    flex: 1;
}
.cl-avatar {
    width: 24px;
    height: 24px;
    flex: none;
    border-radius: 50%;
    background: #e0e0e0;
    font-size: 10px;
    font-weight: 600;
    text-align: center;
    line-height: 24px;
    margin-bottom: -2px;
}
.cl-gear {
    color: #333;
    margin-bottom: 15px;
    width: 17px;
    height: 17px;
}
.cl-main {
    flex: 1;
    display: flex;
    flex-direction: column;
    align-items: center;
}
.cl-title {
    width: 100%;
    height: 37px;
    display: flex;
    align-items: center;
    padding-left: 8px;
    flex: none;
}
.cl-name {
    margin-left: 14px;
    font-size: 12.500px;
}
.cl-btns {
    gap: 34px;
    padding-right: 17px;
}
.cl-tools {
    align-self: flex-end;
    display: flex;
    gap: 24px;
    margin: 66px 91px 0 0;
    height: 20px;
}
.cl-digits {
    display: flex;
    align-items: baseline;
    align-self: flex-start;
    margin: 7px 0 0 77px;
    line-height: 80px;
    font-family: Roboto, sans-serif;
    font-weight: 300;
    font-size: 111px;
    letter-spacing: -2.600px;
    white-space: nowrap;
}
.cl-frac {
    font-size: 78px;
    letter-spacing: 1.500px;
    margin-left: 4px;
}
.cl-units {
    display: grid;
    grid-template-columns: repeat(3, 146px);
    margin: 15px 0 0 -108px;
    font-size: 22px;
    line-height: 28px;
    text-align: center;
}
.cl-actions {
    display: flex;
    align-items: center;
    gap: 28px;
    margin-top: 41px;
    margin-left: -2px;
}
.cl-pause {
    width: 66px;
    height: 66px;
    border-radius: 50%;
    background: #0067c0;
    display: flex;
    align-items: center;
    justify-content: center;
}
.cl-round {
    width: 64px;
    height: 64px;
    border-radius: 50%;
    background: #fff;
    border: 1px solid #eee;
    border-bottom: 2px solid #d5d5d5;
    display: flex;
    align-items: center;
    justify-content: center;
}

/* ---- chrome ---- */
.chrome {
    position: absolute;
    left: 1719px;
    top: 0;
    width: 1918px;
    height: 1031px;
    display: flex;
    flex-direction: column;
    background: #fff;
    font-size: 12px;
    color: #444;
}
.tabs {
    height: 34px;
    flex: none;
    display: flex;
    align-items: stretch;
    background: #dee1e6;
    padding-left: 9px;
}
.tab {
    width: 205.300px;
    display: flex;
    align-items: center;
    gap: 9px;
    padding: 0 11px 0 12px;
    position: relative;
}
.tab::after {
    content: "";
    position: absolute;
    right: 0;
    top: 7px;
    height: 20px;
    width: 1px;
    background: #a8abb0;
}
.tab-on {
    background: #fff;
    border-radius: 8px 8px 0 0;
}
.tab-on::after, .tab:nth-child(5)::after, .tab:nth-child(6)::after {
    display: none;
}
.fav {
    width: 15px;
    height: 15px;
    flex: none;
}
.tab-t {
    flex: 1;
    overflow: hidden;
    white-space: nowrap;
    font-size: 12.500px;
    -webkit-mask-image: linear-gradient(to right, #000 88%, transparent);
    mask-image: linear-gradient(to right, #000 88%, transparent);
}
.tab-x {
    font-size: 13px;
    width: 12px;
    text-align: center;
    color: #333;
}
.tab-plus {
    font-size: 24px;
    font-weight: 300;
    margin-left: 14px;
    line-height: 34px;
    color: #333;
}
.chr-btns {
    margin-left: auto;
    display: flex;
    align-items: center;
    gap: 33px;
    padding-right: 15px;
}
.chr-btns svg {
    width: 12px;
    height: 12px;
}
.address {
    height: 38px;
    flex: none;
    display: flex;
    align-items: center;
    padding-left: 6px;
}
.nav-b {
    width: 32px;
    display: flex;
    justify-content: center;
}
.nav-b svg {
    width: 15px;
    height: 16px;
}
.omni {
    width: 1522px;
    height: 34px;
    margin: 4px 0 0 6px;
    display: flex;
    align-items: center;
    padding: 0 14px 0 14px;
    gap: 7px;
    background: #f1f3f4;
    border-radius: 17px;
    flex: none;
}
.url {
    flex: 1;
    font-family: "Liberation Sans", sans-serif;
    font-size: 14px;
    color: #5f6368;
    white-space: nowrap;
    overflow: hidden;
}
.url b {
    font-weight: 400;
    color: #202124;
}
.om-star {
    margin-left: 9px;
}
.ext {
    width: 32px;
    display: flex;
    justify-content: center;
}
.ext svg {
    width: 15px;
    height: 16px;
}
.ext:first-of-type {
    margin-left: 6px;
}
.avatar {
    width: 22px;
    height: 22px;
    margin-left: 5px;
    border-radius: 50%;
    background: linear-gradient(#6fb5d8 0 45%, #3b4a55 55% 100%);
}
.update {
    width: 81px;
    height: 28px;
    margin-left: 8px;
    border: 1px solid #c5221f;
    border-radius: 14px;
    color: #c5221f;
    display: flex;
    align-items: center;
    padding-left: 12px;
    gap: 9px;
    font-size: 13px;
}
.dots {
    width: 3px;
    height: 3px;
    border-radius: 50%;
    background: #c5221f;
    box-shadow: 0 -6px #c5221f, 0 6px #c5221f;
}
.bookmarks {
    height: 36px;
    flex: none;
    display: flex;
    align-items: center;
    gap: 18px;
    padding-left: 16px;
    border-bottom: 1px solid #c8ccd1;
    font-size: 12.500px;
    color: #3c4043;
}
.bookmarks a {
    display: flex;
    align-items: center;
    gap: 6px;
    white-space: nowrap;
}
.bm {
    width: 13px;
    height: 18px;
}
.bm-i {
    width: 15px;
    height: 15px;
}
.aws-bar {
    height: 42px;
    flex: none;
    display: flex;
    align-items: center;
    background: #232f3e;
    color: #fff;
    font-family: Roboto, sans-serif;
    font-size: 13px;
}
.aws-logo {
    width: 50px;
    padding-left: 18px;
    box-sizing: content-box;
    font-size: 19px;
    line-height: 15px;
    display: flex;
    flex-direction: column;
    align-items: flex-start;
    margin-top: -2px;
}
.aws-sep {
    width: 1px;
    height: 24px;
    background: #414d5c;
    margin-left: -2px;
}
.aws-grid {
    margin-left: 17px;
}
.aws-services {
    margin-left: 8px;
    font-weight: 500;
}
.aws-search {
    width: 540px;
    height: 30px;
    margin-left: 17px;
    background: #161d26;
    border: 1px solid #7d8998;
    border-radius: 2px;
    display: flex;
    align-items: center;
    gap: 10px;
    padding: 0 10px;
    color: #95a5a6;
    font-size: 15px;
}
.aws-search em {
    flex: 1;
}
.aws-right {
    margin-left: auto;
    display: flex;
    align-items: center;
    height: 100%;
}
.ar-ic {
    width: 50px;
    height: 24px;
    display: flex;
    align-items: center;
    justify-content: center;
    border-right: 1px solid #414d5c;
}
.ar-txt {
    width: 107px;
    padding-left: 18px;
    height: 24px;
    display: flex;
    align-items: center;
    gap: 6px;
    white-space: nowrap;
}
.ar-user {
    width: 180px;
    border-left: 1px solid #414d5c;
}
.ar-caret {
    flex: none;
}
.console {
    flex: 1;
    min-height: 0;
    display: flex;
    font-family: Roboto, sans-serif;
}
.side-nav {
    position: relative;
    width: 224px;
    flex: none;
    padding-top: 17px;
    display: flex;
    flex-direction: column;
    overflow: hidden;
    font-size: 14px;
    color: #545b64;
}
.nav-x {
    position: absolute;
    left: 186px;
    top: 25px;
}
.side-nav a {
    height: 30px;
    line-height: 30px;
    padding-left: 32px;
    flex: none;
}
.side-nav a.on {
    color: #0073bb;
    font-weight: 700;
}
.side-nav h4 {
    margin: 12px 0 0;
    height: 32px;
    flex: none;
    display: flex;
    align-items: center;
    gap: 7px;
    padding-left: 13px;
    font-size: 14px;
    font-weight: 700;
    color: #414750;
}
.new {
    align-self: flex-start;
    flex: none;
    height: 16px;
    margin: -1px 0 6px 40px;
    font-size: 12px;
    line-height: 14px;
    color: #0073bb;
    font-weight: 500;
    border-bottom: 1px dashed #0073bb;
}
.nav-scroll {
    position: relative;
    width: 15px;
    flex: none;
    background: #f1f1f1;
}
.ns-up, .ns-down {
    position: absolute;
    left: 4px;
    border: 4px solid transparent;
}
.ns-up {
    top: 5px;
    border-bottom: 5px solid #a3a3a3;
}
.ns-down {
    bottom: 3px;
    border-top: 5px solid #505050;
}
.ns-thumb {
    position: absolute;
    left: 0;
    top: 17px;
    width: 100%;
    height: 661px;
    background: #c1c1c1;
}
.aws-main {
    flex: 1;
    min-width: 0;
    display: flex;
    flex-direction: column;
    border-left: 1px solid #aab7b8;
    background: #f2f3f3;
}
.list-top {
    height: 82px;
    flex: none;
    padding: 10px 18px 0 20px;
    background: #fafafa;
    border-bottom: 1px solid #eaeded;
}
.lt-row1 {
    height: 28px;
    display: flex;
    align-items: center;
}
.lt-row1 h1 {
    margin: 0;
    font-size: 20px;
    font-weight: 500;
    color: #16191f;
    line-height: 28px;
}
.lt-row1 h1 span {
    font-weight: 400;
    color: #687078;
}
.lt-row1 h1 a {
    font-size: 12px;
    font-weight: 500;
    color: #0073bb;
    margin-left: 2px;
}
.lt-btns {
    margin-left: auto;
    display: flex;
    gap: 8px;
    height: 28px;
}
.a-btn {
    display: flex;
    align-items: center;
    justify-content: center;
    gap: 11px;
    height: 28px;
    background: #fff;
    border: 1px solid #545b64;
    border-radius: 2px;
    font-size: 14px;
    font-weight: 500;
    color: #545b64;
}
.a-refresh {
    width: 49px;
    border-color: #16191f;
}
.a-off {
    width: 98px;
    color: #aab7b8;
    border-color: #d5dbdb;
}
.a-state {
    width: 156px;
}
.a-act {
    width: 112px;
}
.a-launch {
    width: 153px;
    margin-right: -6px;
    background: #ff9900;
    border-color: #ff9900;
    color: #16191f;
}
.a-drop {
    width: 30px;
    background: #ff9900;
    border-color: #ff9900;
    color: #16191f;
}
.lt-row2 {
    height: 28px;
    margin-top: 6px;
    display: flex;
    align-items: center;
}
.filter {
    width: 648px;
    height: 27px;
    background: #fff;
    border: 1px solid #545b64;
    border-radius: 2px;
    display: flex;
    align-items: center;
    gap: 8px;
    padding-left: 8px;
    font-size: 14px;
    color: #687078;
}
.pager {
    margin-left: auto;
    display: flex;
    align-items: center;
    gap: 18px;
    height: 28px;
    font-size: 14px;
    color: #16191f;
}
.pager i {
    width: 1px;
    height: 28px;
    background: #eaeded;
}
.pg-gear {
    color: #545b64;
    margin-left: -6px;
    margin-right: 5px;
}
.inst {
    flex: none;
    background: #fff;
    overflow: hidden;
    font-size: 14px;
}
.inst-row {
    height: 33.500px;
    display: grid;
    grid-template-columns: 53px 140px 200px 160px 150px 150px 130px 170px 201px 150px 150px 24px;
    align-items: center;
    border-bottom: 1px solid #eaeded;
    color: #545b64;
}
.inst-row > div {
    display: flex;
    align-items: center;
    padding-left: 17px;
    white-space: nowrap;
    overflow: hidden;
    height: 100%;
}
.inst-row > div:first-child {
    padding-left: 20px;
}
.inst-head {
    height: 33px;
    background: #fafafa;
    font-weight: 500;
}
.inst-head > div {
    position: relative;
}
.inst-head > div::after {
    content: "";
    position: absolute;
    right: 0;
    top: 6px;
    bottom: 7px;
    width: 1px;
    background: #687078;
}
.inst-head > div:first-child::after {
    background: #eaeded;
}
.inst-head .sel {
    color: #16191f;
}
.inst-head .last::after {
    display: none;
}
.sort {
    margin-left: auto;
    margin-right: 12px;
    flex: none;
    color: #687078;
}
.inst-head svg:not(.sort) {
    margin-left: 4px;
}
.a-check {
    width: 14px;
    height: 14px;
    background: #fff;
    border: 1px solid #545b64;
    border-radius: 2px;
}
.link {
    color: #0073bb;
}
.st-cell {
    gap: 3px;
}
.st-cell svg {
    flex: none;
}
.st-name {
    color: #687078;
    width: 73px;
    flex: none;
}
.st-long .st-name {
    width: 82px;
    overflow: hidden;
}
.zi {
    margin-left: 8px;
}
.zo {
    margin-left: 8px;
}
.plus {
    font-size: 24px;
    font-weight: 300;
    line-height: 20px;
    margin-left: 14px;
}
.h-scroll {
    height: 19px;
    flex: none;
    position: relative;
    background: #f1f1f1;
    border-bottom: 2px solid #aab7b8;
}
.hs-thumb {
    position: absolute;
    left: 17px;
    top: 3px;
    width: 1019px;
    height: 13px;
    background: #bdbdbd;
}
.hs-left, .hs-right {
    position: absolute;
    top: 6px;
    border: 3px solid transparent;
}
.hs-left {
    left: 4px;
    border-right: 4px solid #a3a3a3;
}
.hs-right {
    right: 0;
    border-left: 4px solid #505050;
}
.grey-gap {
    height: 67px;
    flex: none;
    background: #f2f3f3;
    border-bottom: 1px solid #d5dbdb;
}
.split {
    position: relative;
    flex: 1;
    background: #fff;
    display: flex;
    align-items: flex-start;
    padding: 13px 22px 0 21px;
}
.split h3 {
    margin: 0;
    font-size: 18px;
    font-weight: 700;
    line-height: 27px;
    color: #16191f;
}
.split-handle {
    position: absolute;
    left: 50%;
    top: 5px;
    width: 12px;
    height: 5px;
    border-top: 1px solid #545b64;
    border-bottom: 1px solid #545b64;
}
.split-tools {
    margin-left: auto;
    display: flex;
    align-items: center;
    gap: 9px;
    color: #545b64;
}
.split-tools i {
    width: 1px;
    height: 24px;
    background: #eaeded;
}
.split-tools svg:last-child {
    margin-left: 3px;
}
.aws-foot {
    height: 31px;
    flex: none;
    display: flex;
    align-items: center;
    gap: 24px;
    background: #232f3e;
    color: #f2f3f3;
    font-family: Roboto, sans-serif;
    font-size: 13px;
    padding: 0 14px 0 16px;
}
.foot-term {
    margin-right: -20px;
    color: #fff;
}
.ft-fb {
    margin-left: 0;
}
.ft-right {
    margin-left: auto;
    margin-right: 6px;
}
```
FILE: script.js
```js
// jmeter results, sample number starts at 11
const times = ["22.065", "23.176", "24.279", "25.400", "26.502", "27.624", "28.743", "29.847", "30.954", "32.075", "33.201", "34.324", "35.428", "36.547", "37.654", "38.760", "39.871", "40.966", "42.089", "43.197", "44.304", "45.412", "46.517", "47.620", "48.735", "49.852", "50.955", "52.058", "53.162", "54.281", "55.387", "56.495", "57.599", "58.706", "59.813"];
const durations = [104, 103, 103, 104, 103, 104, 103, 104, 103, 104, 106, 103, 104, 103, 106, 103, 104, 106, 103, 106, 103, 104, 103, 106, 104, 103, 106, 106, 106, 108, 106, 101, 102, 99, 102];

const resRows = document.getElementById("resRows");
times.forEach((t, i) => {
    const d = durations[i];
    const bytes = i === 29 ? 657 : 651;
    const latency = i === 29 ? 106 : (d === 101 ? 100 : d);
    const row = document.createElement("div");
    row.className = "res-row";
    row.innerHTML = `<span>${i + 11}</span><span>16:58:${t}</span><span class="left">Thread Group 1-1</span><span class="left">MastersTestAPI</span><span>${d}</span><span class="mid"><svg width="13" height="17"><use href="#shield"/></svg></span><span>${bytes}</span><span>182</span><span>${latency}</span><span>0</span>`;
    resRows.appendChild(row);
});

// ec2 instances
const instances = [
    ["i-060fcf0730944e752", "s", "us-east-1a", "ec2-52-23-201-193.co...", "52.23.201.193"],
    ["i-05321b95840b96c41", "s", "us-east-1b", "ec2-107-20-131-163.co...", "107.20.131.163"],
    ["i-0ba06e6c851b0e118", "t", "us-east-1a", "–", "–"],
    ["i-0b7a57ca0ee0d22ee", "t", "us-east-1a", "–", "–"],
    ["i-0148eae6e11d95961", "t", "us-east-1b", "–", "–"],
    ["i-0dc0e00d86798b26c", "t", "us-east-1b", "–", "–"],
    ["i-02520ff52b3931a7c", "t", "us-east-1b", "–", "–"],
    ["i-034db466928daffc0", "t", "us-east-1b", "–", "–"],
    ["i-03851f8b1bdd4d91a", "t", "us-east-1a", "–", "–"],
    ["i-0414b8230df2141d6", "t", "us-east-1a", "–", "–"],
];

const instTable = document.getElementById("instTable");
instances.forEach(([id, state, zone, dns, ip]) => {
    const shutting = state === "s";
    const row = document.createElement("div");
    row.className = "inst-row";
    row.innerHTML = `<div><i class="a-check"></i></div><div></div><div class="link">${id}</div>`
        + `<div class="st-cell ${shutting ? "st-long" : ""}"><svg width="15" height="15"><use href="#${shutting ? "wait-state" : "stop-state"}"/></svg><span class="st-name">${shutting ? "Shutting-d..." : "Terminated"}</span><svg class="zi" width="15" height="17"><use href="#zoomin"/></svg><svg class="zo" width="15" height="17"><use href="#zoomout"/></svg></div>`
        + `<div>t2.micro</div><div>–</div><div>No alarms <span class="plus">+</span></div><div>${zone}</div><div>${dns}</div><div>${ip}</div><div>–</div><div>–</div>`;
    instTable.appendChild(row);
});
```
